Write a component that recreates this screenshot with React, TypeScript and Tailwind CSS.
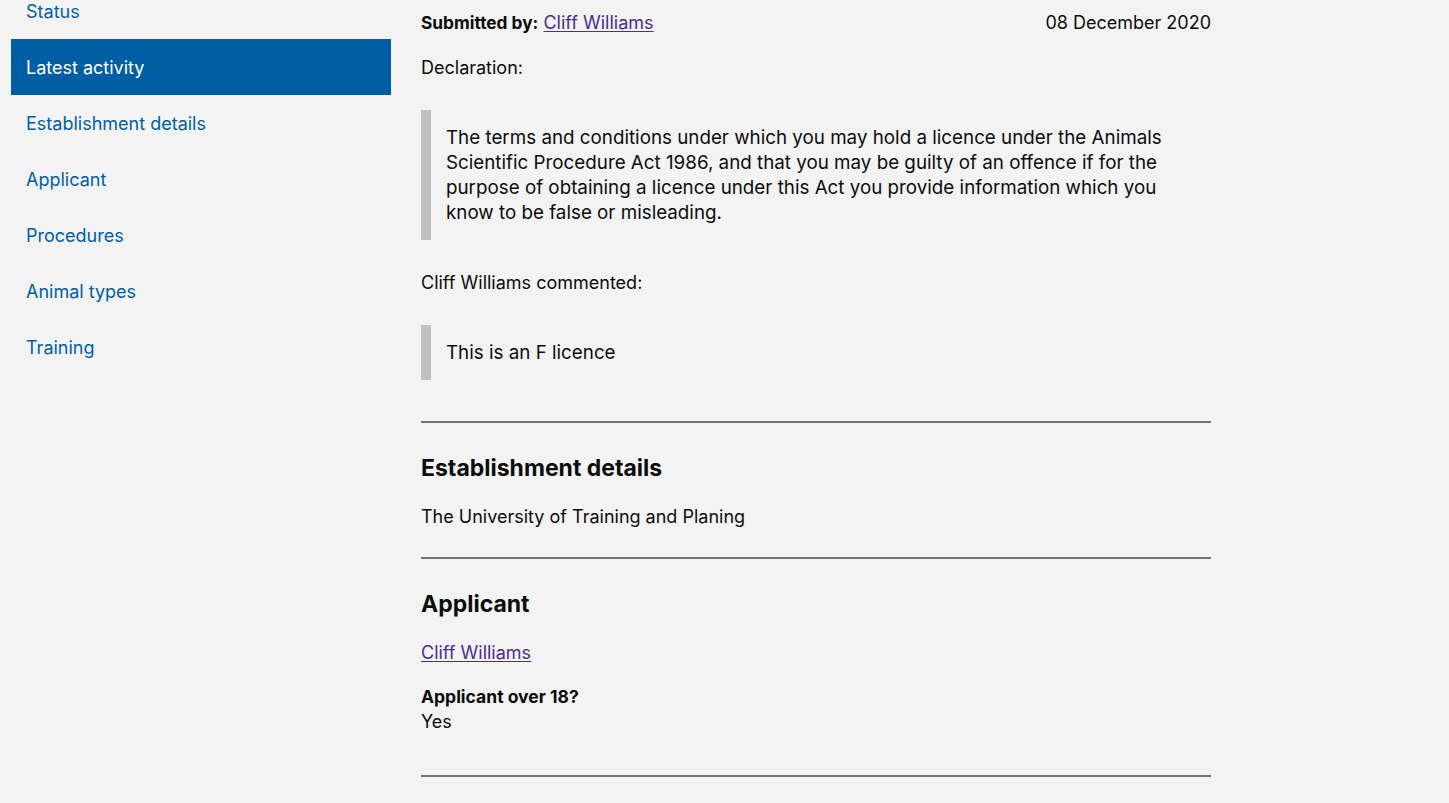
const nav = [
  "Status",
  "Latest activity",
  "Establishment details",
  "Applicant",
  "Procedures",
  "Animal types",
  "Training",
];

function Quote({ children }: { children: React.ReactNode }) {
  return (
    <div className="border-l-[10px] border-[#bfc1c3] py-[15px] pl-[15px] pr-[30px] text-[18.8px]">
      {children}
    </div>
  );
}

export default function App() {
  return (
    <div
      className="min-h-[803px] bg-[#f3f3f3] text-[#0b0c0c] text-[18px] leading-[25px]"
      style={{ fontFamily: "Inter, 'Liberation Sans', sans-serif" }}
    >
      <div className="flex gap-[30px] pl-[11px]">
        <nav className="w-[380px] shrink-0 -mt-[17px]">
          {nav.map(item =>
            item === "Latest activity" ? (
              <div key={item} className="h-[56px] flex items-center px-[15px] bg-[#005ea5] text-white">
                {item}
              </div>
            ) : (
              <div key={item} className="h-[56px] flex items-center px-[15px] text-[#005ea5]">
                {item}
              </div>
            )
          )}
        </nav>

        <main className="w-[790px] pt-[10px]">
          <div className="flex justify-between">
            <p>
              <span className="font-bold text-[17.3px]">Submitted by:</span>{" "}
              <a href="#" className="text-[#4c2c92] underline underline-offset-2">Cliff Williams</a>
            </p>
            <p>08 December 2020</p>
          </div>

          <p className="mt-[20px]">Declaration:</p>
          <div className="mt-[30px]">
            <Quote>
              The terms and conditions under which you may hold a licence under the Animals
              Scientific Procedure Act 1986, and that you may be guilty of an offence if for the
              purpose of obtaining a licence under this Act you provide information which you
              know to be false or misleading.
            </Quote>
          </div>

          <p className="mt-[30px]">Cliff Williams commented:</p>
          <div className="mt-[30px]">
            <Quote>This is an F licence</Quote>
          </div>

          <hr className="mt-[41px] border-t-2 border-[#6f777b]" />

          <h2 className="mt-[30px] text-[23px] leading-[30px] font-bold">Establishment details</h2>
          <p className="mt-[21px]">The University of Training and Planing</p>

          <hr className="mt-[28px] border-t-2 border-[#6f777b]" />

          <h2 className="mt-[30px] text-[23px] leading-[30px] font-bold">Applicant</h2>
          <p className="mt-[21px]">
            <a href="#" className="text-[#4c2c92] underline underline-offset-2">Cliff Williams</a>
          </p>
          <p className="mt-[19px] font-bold text-[17.5px]">Applicant over 18?</p>
          <p>Yes</p>

          <hr className="mt-[41px] border-t-2 border-[#6f777b]" />
        </main>
      </div>
    </div>
  );
}
